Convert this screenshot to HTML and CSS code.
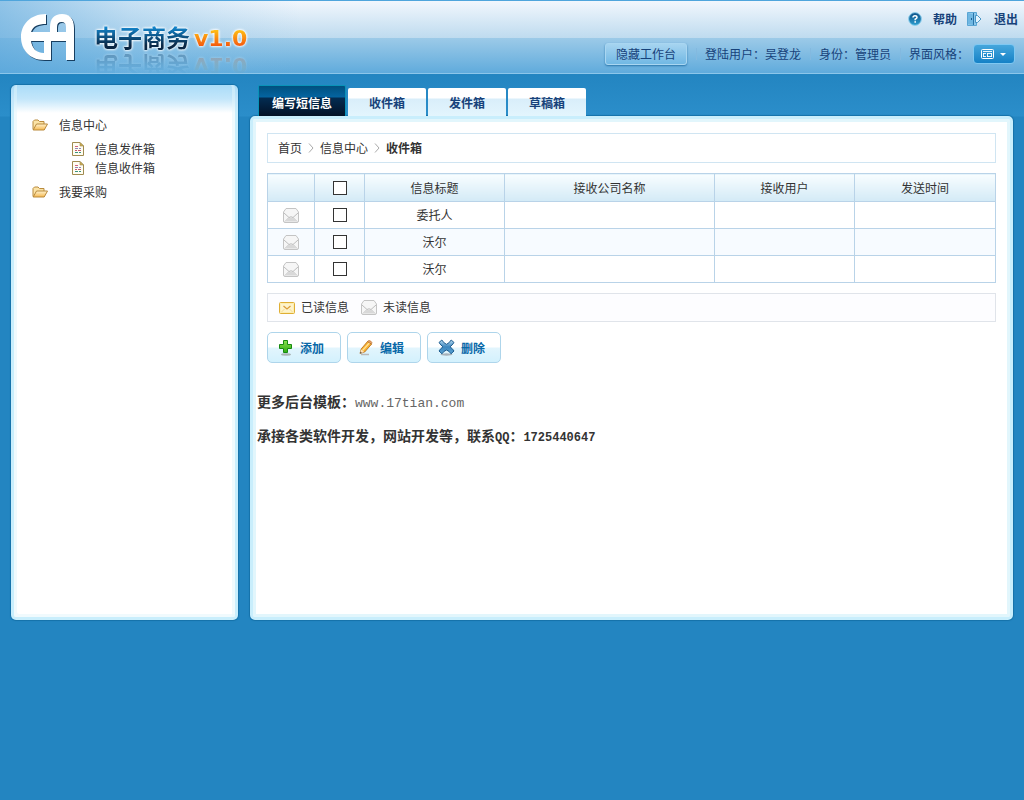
FILE: index.html
```html
<!DOCTYPE html>
<html lang="zh-CN">
<head>
<meta charset="utf-8">
<title>电子商务 v1.0</title>
<link rel="stylesheet" href="styles.css">
</head>
<body>
<svg class="defs" aria-hidden="true">
  <defs>
    <linearGradient id="g-folder" x1="0" y1="0" x2="0" y2="1"><stop offset="0" stop-color="#fff3cf"/><stop offset="1" stop-color="#f6b850"/></linearGradient>
    <linearGradient id="g-help" x1="0" y1="0" x2="0" y2="1"><stop offset="0" stop-color="#0d4f86"/><stop offset="1" stop-color="#2b9ed0"/></linearGradient>
    <linearGradient id="g-plus" x1="0" y1="0" x2="0" y2="1"><stop offset="0" stop-color="#8be052"/><stop offset="1" stop-color="#2fae10"/></linearGradient>
    <linearGradient id="g-cross" x1="0" y1="0" x2="0" y2="1"><stop offset="0" stop-color="#b9dcf2"/><stop offset="0.5" stop-color="#3c86bd"/><stop offset="1" stop-color="#5aa3d4"/></linearGradient>
    <symbol id="folder" viewBox="0 0 16 12">
      <path d="M1 10.500V2.500L2.500 1H6l1.500 1.500H12V5" fill="#fbe3a6" stroke="#b98a3c"/>
      <path d="M1.200 11L4.500 5h11L12.200 11z" fill="url(#g-folder)" stroke="#b98a3c" stroke-linejoin="round"/>
    </symbol>
    <symbol id="doc" viewBox="0 0 12 14">
      <path d="M.5.500h7.500l3.500 3.500v9.500H.500z" fill="#fffdf2" stroke="#a08b50"/>
      <path d="M8 .500V4h3.500z" fill="#cfae4f" stroke="#a08b50" stroke-width=".6"/>
      <path d="M3 4.500h3" stroke="#d4637a"/><path d="M3 6.500h3M7 6.500h2" stroke="#8f86b8"/><path d="M3 8.500h2M6 8.500h3" stroke="#c55a6c"/><path d="M3 10.500h3M7 10.500h2" stroke="#3a937f"/>
    </symbol>
    <symbol id="mail-open" viewBox="0 0 16 15">
      <path d="M.5 4L3 .500h10L15.500 4v9q0 1.500-1.500 1.500H2Q.500 14.500.500 13z" fill="#f6f6f6" stroke="#c4c4c4"/>
      <path d="M1 5l5 4.500L2 13.500M15 5l-5 4.500 4 4M6 9.500q2-1.500 4 0" fill="none" stroke="#bdbdbd"/>
      <path d="M2.500 13.500L6 10.200q2-1.200 4 0l3.500 3.300z" fill="#d8d8d8"/>
    </symbol>
    <symbol id="mail-closed" viewBox="0 0 16 12">
      <rect x=".5" y=".5" width="15" height="11" rx="1" fill="#fdeeb0" stroke="#dfae35"/>
      <path d="M2 2h12v8H2z" fill="#fdf3cc"/>
      <path d="M4.500 4L8 7l3.500-3" fill="none" stroke="#dc9e3a" stroke-width="1.300"/>
      <path d="M2.500 10l3-3M13.500 10l-3-3" stroke="#f3d27a" stroke-width=".8"/>
    </symbol>
    <path id="mark" fill-rule="evenodd" fill="currentColor" d="M26 2C10 2 1 13 1 25S9 48 24 48H31V29H46V48H54V16C54 6 49 2 42 2C34 2 30 7 30 15V20H11C13 14 18 12 26 12ZM11 29H24V41C16 41 12 36 11 29ZM37 20V15Q37 10 41.500 10T46 15V20Z"/>
  </defs>
</svg>

<header class="header">
  <div class="brand">
    <svg class="logo" viewBox="0 0 57 50" aria-hidden="true">
      <use href="#mark" x="1" y="1" color="#173e60"/>
      <use href="#mark" color="#fff"/>
    </svg>
    <h1 class="product">
      <span class="name">电子商务</span><span class="version">v1.0</span>
    </h1>
  </div>
  <div class="tools">
    <nav class="links">
      <a href="#help"><svg width="14" height="14" viewBox="0 0 14 14" aria-hidden="true"><circle cx="7" cy="7" r="6.400" fill="url(#g-help)" stroke="#8ed0ee"/><path d="M5 5.500Q5 3.800 7 3.800T9 5.500Q9 6.500 7.200 7.200V8.300" fill="none" stroke="#fff" stroke-width="1.500"/><rect x="6.400" y="9.200" width="1.600" height="1.500" fill="#fff"/></svg>帮助</a>
      <a href="#exit"><svg width="16" height="14" viewBox="0 0 16 14" aria-hidden="true"><path d="M.5.500h9v13H.500z" fill="#8cc8ec" stroke="#5aa6d4"/><path d="M1 1l5 1.500V13L1 12z" fill="#6fb7e2"/><path d="M6.500 1v12" stroke="#2874a8"/><path d="M4.500 6v2" stroke="#1c5c90"/><path d="M8.500 3.500h2L14 7l-3.500 3.500h-2z" fill="#e2f4ff" stroke="#3c8dc0" stroke-width=".9"/></svg>退出</a>
    </nav>
    <div class="status">
      <button class="hide-btn" type="button">隐藏工作台</button>
      <span class="item">登陆用户：吴登龙</span>
      <span class="item">身份：管理员</span>
      <span class="item">界面风格：</span>
      <button class="style-btn" type="button" aria-label="界面风格">
        <svg width="28" height="12" viewBox="0 0 28 12" aria-hidden="true"><rect x="1.500" y="1.500" width="12" height="9" rx="1" fill="none" stroke="#fff"/><path d="M3 3.500h9M3 5.500h3M3.500 5v4M3 8.500h3M7 5.500h5M7 8.500h5M7.500 5v4M11.500 5v4" stroke="#fff" stroke-width=".9"/><path d="M20 5h6l-3 3z" fill="#fff"/></svg>
      </button>
    </div>
  </div>
</header>

<div class="layout">
  <aside class="panel sidebar">
    <ul class="tree">
      <li><a href="#center"><svg width="16" height="12" aria-hidden="true"><use href="#folder"/></svg>信息中心</a>
        <ul class="sub">
          <li><a href="#outbox"><svg width="12" height="14" aria-hidden="true"><use href="#doc"/></svg>信息发件箱</a></li>
          <li><a href="#inbox"><svg width="12" height="14" aria-hidden="true"><use href="#doc"/></svg>信息收件箱</a></li>
        </ul>
      </li>
      <li><a href="#buy"><svg width="16" height="12" aria-hidden="true"><use href="#folder"/></svg>我要采购</a></li>
    </ul>
  </aside>

  <main class="main">
    <nav class="tabs">
      <a class="tab active" href="#write">编写短信息</a>
      <a class="tab" href="#in">收件箱</a>
      <a class="tab" href="#out">发件箱</a>
      <a class="tab" href="#draft">草稿箱</a>
    </nav>
    <section class="panel content">
      <div class="inner">
        <nav class="crumbs">
          <a href="#home">首页</a>
          <svg width="6" height="10" viewBox="0 0 6 10" aria-hidden="true"><path d="M1 .500L5 5 1 9.500" fill="none" stroke="#aaa"/></svg>
          <a href="#center">信息中心</a>
          <svg width="6" height="10" viewBox="0 0 6 10" aria-hidden="true"><path d="M1 .500L5 5 1 9.500" fill="none" stroke="#aaa"/></svg>
          <strong>收件箱</strong>
        </nav>
        <table class="grid">
          <colgroup><col class="c-icon"><col class="c-check"><col class="c-title"><col class="c-company"><col class="c-user"><col class="c-time"></colgroup>
          <thead>
            <tr><th></th><th><input type="checkbox" aria-label="全选"></th><th>信息标题</th><th>接收公司名称</th><th>接收用户</th><th>发送时间</th></tr>
          </thead>
          <tbody>
            <tr><td><svg width="16" height="15" aria-hidden="true"><use href="#mail-open"/></svg></td><td><input type="checkbox" aria-label="委托人"></td><td>委托人</td><td></td><td></td><td></td></tr>
            <tr><td><svg width="16" height="15" aria-hidden="true"><use href="#mail-open"/></svg></td><td><input type="checkbox" aria-label="沃尔"></td><td>沃尔</td><td></td><td></td><td></td></tr>
            <tr><td><svg width="16" height="15" aria-hidden="true"><use href="#mail-open"/></svg></td><td><input type="checkbox" aria-label="沃尔"></td><td>沃尔</td><td></td><td></td><td></td></tr>
          </tbody>
        </table>
        <div class="legend">
          <span><svg width="16" height="12" aria-hidden="true"><use href="#mail-closed"/></svg>已读信息</span>
          <span><svg width="16" height="15" aria-hidden="true"><use href="#mail-open"/></svg>未读信息</span>
        </div>
        <div class="actions">
          <button type="button"><svg width="16" height="16" viewBox="0 0 16 16" aria-hidden="true"><ellipse cx="8" cy="14.500" rx="5" ry="1.200" fill="#a9b5b5"/><path d="M5.500 .500h4v4h4v4h-4v4h-4v-4h-4v-4h4z" fill="url(#g-plus)" stroke="#168a10"/></svg>添加</button>
          <button type="button"><svg width="16" height="16" viewBox="0 0 16 16" aria-hidden="true"><path d="M3 14.500h8" stroke="#b9b9b9" stroke-width="1.500"/><path d="M2 13.500L3.200 9 9.500 1.500l4 2.700L6.700 12z" fill="#f9b233" stroke="#b26a16" stroke-width=".8"/><path d="M4.500 10.500l7.300-8" stroke="#ffe49a" stroke-width="1.200"/><path d="M9.500 1.500l1.200-1q2-.3 3.300 2.200l-.6 1.400z" fill="#e8a070" stroke="#b26a16" stroke-width=".6"/><path d="M2 13.500l1.200-4 3 2.500z" fill="#fbe3c0"/><path d="M2 13.500l.6-1.800 1.200 1z" fill="#333"/></svg>编辑</button>
          <button type="button"><svg width="17" height="17" viewBox="0 0 17 17" aria-hidden="true"><ellipse cx="8.500" cy="15.500" rx="6" ry="1.200" fill="#a8b2ba"/><path d="M1 3.500L3.800 1Q6 4.500 8.500 5.300 11 4.500 13.200 1L16 3.500Q14 6.500 12 7.800 14.500 9.500 16 12l-3 2.800Q11.500 12 8.500 11 5.500 12 4 14.800L1 12Q2.500 9.500 5 7.800 3 6.500 1 3.500z" fill="url(#g-cross)" stroke="#1c5c90"/></svg>删除</button>
        </div>
      </div>
      <div class="notes">
        <p><strong>更多后台模板：</strong><a class="url" href="#site">www.17tian.com</a></p>
        <p><strong>承接各类软件开发，网站开发等，联系<span class="mono">QQ</span>：<span class="mono">1725440647</span></strong></p>
      </div>
    </section>
  </main>
</div>
</body>
</html>
```

FILE: styles.css
```css
* { box-sizing: border-box; }
body {
  margin: 0;
  min-height: 100vh;
  background: #2385c1;
  color: #333;
  font: 12px/18px "Noto Sans CJK SC", sans-serif;
}
a { color: inherit; text-decoration: none; }
ul { margin: 0; padding: 0; list-style: none; }
button { font: inherit; margin: 0; cursor: pointer; }
.defs { position: absolute; width: 0; height: 0; }

/* header */
.header {
  display: flex;
  justify-content: space-between;
  height: 74px;
  border-top: 1px solid #4fa5dc;
  border-bottom: 1px solid #8cc6ea;
  background:
    linear-gradient(90deg, rgba(92, 168, 220, .65), rgba(120, 185, 228, .35) 130px, rgba(255, 255, 255, 0) 300px),
    linear-gradient(#f2f7fd, #bedbef 37px, #9ccae8 37px, #60abdc 72px);
}
.brand { display: flex; align-items: flex-start; padding: 11px 0 0 20px; }
.logo { width: 57px; height: 50px; }
.product { display: flex; align-items: center; gap: 4px; margin: 6px 0 0 17px; font-size: 24px; line-height: 34px; -webkit-box-reflect: below -8px linear-gradient(transparent 30%, rgba(0, 0, 0, .3)); }
.name, .version { background-clip: text; -webkit-background-clip: text; color: transparent; filter: drop-shadow(0 0 1px #fff) drop-shadow(0 0 1px #fff); }
.name { background-image: linear-gradient(#1287cf 20%, #0a2745 75%); font-weight: 700; }
.version { padding-top: 4px; background-image: linear-gradient(#ffc414 30%, #f24a10 80%); font-family: "DejaVu Sans", sans-serif; font-size: 22px; font-weight: 700; }
.tools { display: flex; flex-direction: column; align-items: flex-end; color: #17427a; }
.links { display: flex; gap: 10px; padding: 9px 6px 0 0; font-weight: 700; }
.links a { display: flex; align-items: center; gap: 11px; }
.status { display: flex; align-items: center; margin-top: 15px; padding-right: 9px; }
.hide-btn { height: 22px; margin-right: 9px; padding: 0 10px; border: 1px solid #a9d6f1; border-radius: 3px; background: linear-gradient(#a6d4f0, #71b8e4); box-shadow: 0 1px 2px #2b77ac; color: #17427a; line-height: 20px; }
.item { padding: 0 9px; background: linear-gradient(#83b9df, #83b9df) left center / 1px 12px no-repeat; }
.item:nth-of-type(3) { padding-right: 4px; }
.style-btn { display: flex; align-items: center; justify-content: center; width: 42px; height: 20px; padding: 0; border: 1px solid #7fc8f2; border-radius: 4px; background: linear-gradient(#45a6dc, #1581c6); }

/* layout */
.layout { display: flex; align-items: flex-end; gap: 12px; padding: 11px 11px 0; background: linear-gradient(#2385c1, #2b8eca 42px, #2385c1 43px); }
.panel { border: 3px solid #c9eefc; padding: 3px; border-radius: 5px; background: #fff; box-shadow: 0 0 1px 1px #1672a9, inset 0 0 0 3px #e2f6fc; }
.sidebar {
  flex: 0 0 227px;
  height: 535px;
  border-color: transparent;
  border-top: 0;
  background:
    linear-gradient(#aadcf8, #c3e6fa 14px, rgba(255, 255, 255, 0) 28px) border-box,
    linear-gradient(#fff, #fff) padding-box,
    linear-gradient(#c9eefc, #c9eefc) border-box;
  box-shadow: 0 0 1px 1px #1672a9, inset 3px -3px 0 #e2f6fc80, inset -3px 0 0 #e2f6fc80;
}
.tree { padding: 28px 0 0 15px; }
.tree a { display: flex; align-items: center; gap: 11px; }
.tree > li { margin-bottom: 6px; }
.sub { padding: 5px 0 0 40px; }
.sub a { height: 19px; }

.main { flex: 1; min-width: 0; }
.tabs { display: flex; align-items: flex-end; gap: 2px; padding-left: 8px; }
.tab { width: 78px; height: 28px; padding-top: 6px; border-radius: 2px 2px 0 0; background: linear-gradient(#fff 10px, #d9eefa 11px, #e3f5fd); color: #17427a; font-weight: 700; text-align: center; }
.tab.active { width: 88px; height: 31px; padding-top: 8px; border: 1px solid #0993b8; border-bottom: 0; background: linear-gradient(#00507f, #0464a0 11px, #032c52 12px, #031126); color: #fff; }
.content { height: 504px; }
.inner { display: flex; flex-direction: column; gap: 10px; padding: 11px 11px 0; }
.crumbs { display: flex; align-items: center; gap: 6px; height: 30px; padding: 0 10px; border: 1px solid #d0e5f2; }
.grid { width: 100%; border-collapse: collapse; table-layout: fixed; }
.grid th, .grid td { height: 27px; padding: 0; border: 1px solid #b9d3e8; font-weight: 400; text-align: center; vertical-align: middle; }
.grid th { height: 28px; background: linear-gradient(#f8fdff, #d3eaf6); }
.grid tbody tr:nth-child(even) { background: #f7fbff; }
.grid svg, .grid input { display: block; margin: 0 auto; }
.grid input { appearance: none; width: 14px; height: 14px; border: 1px solid #333; background: #fff; }
.c-icon { width: 47px; }
.c-check { width: 50px; }
.c-title, .c-user { width: 140px; }
.c-company { width: 210px; }
.legend { display: flex; align-items: center; gap: 12px; height: 29px; padding: 0 11px 2px; border: 1px solid #e0e4ea; background: #fdfdff; }
.legend span { display: flex; align-items: center; gap: 6px; }
.legend svg { margin-top: 2px; }
.actions { display: flex; gap: 6px; }
.actions button { display: flex; align-items: center; justify-content: flex-start; gap: 6px; width: 74px; height: 31px; padding: 0 0 0 10px; border: 1px solid #aed5eb; border-radius: 5px; background: linear-gradient(#fff 14px, #e2f5fd 15px, #d3f1fd); color: #0868a8; font-weight: 700; }
.notes { padding: 26px 1px 0; font-size: 14px; line-height: 24px; }
.notes p { margin: 0 0 10px; }
.url, .mono { font-family: "Liberation Mono", monospace; line-height: 1; }
.url { color: #666; font-size: 13px; }
.mono { font-size: 12px; }
```
